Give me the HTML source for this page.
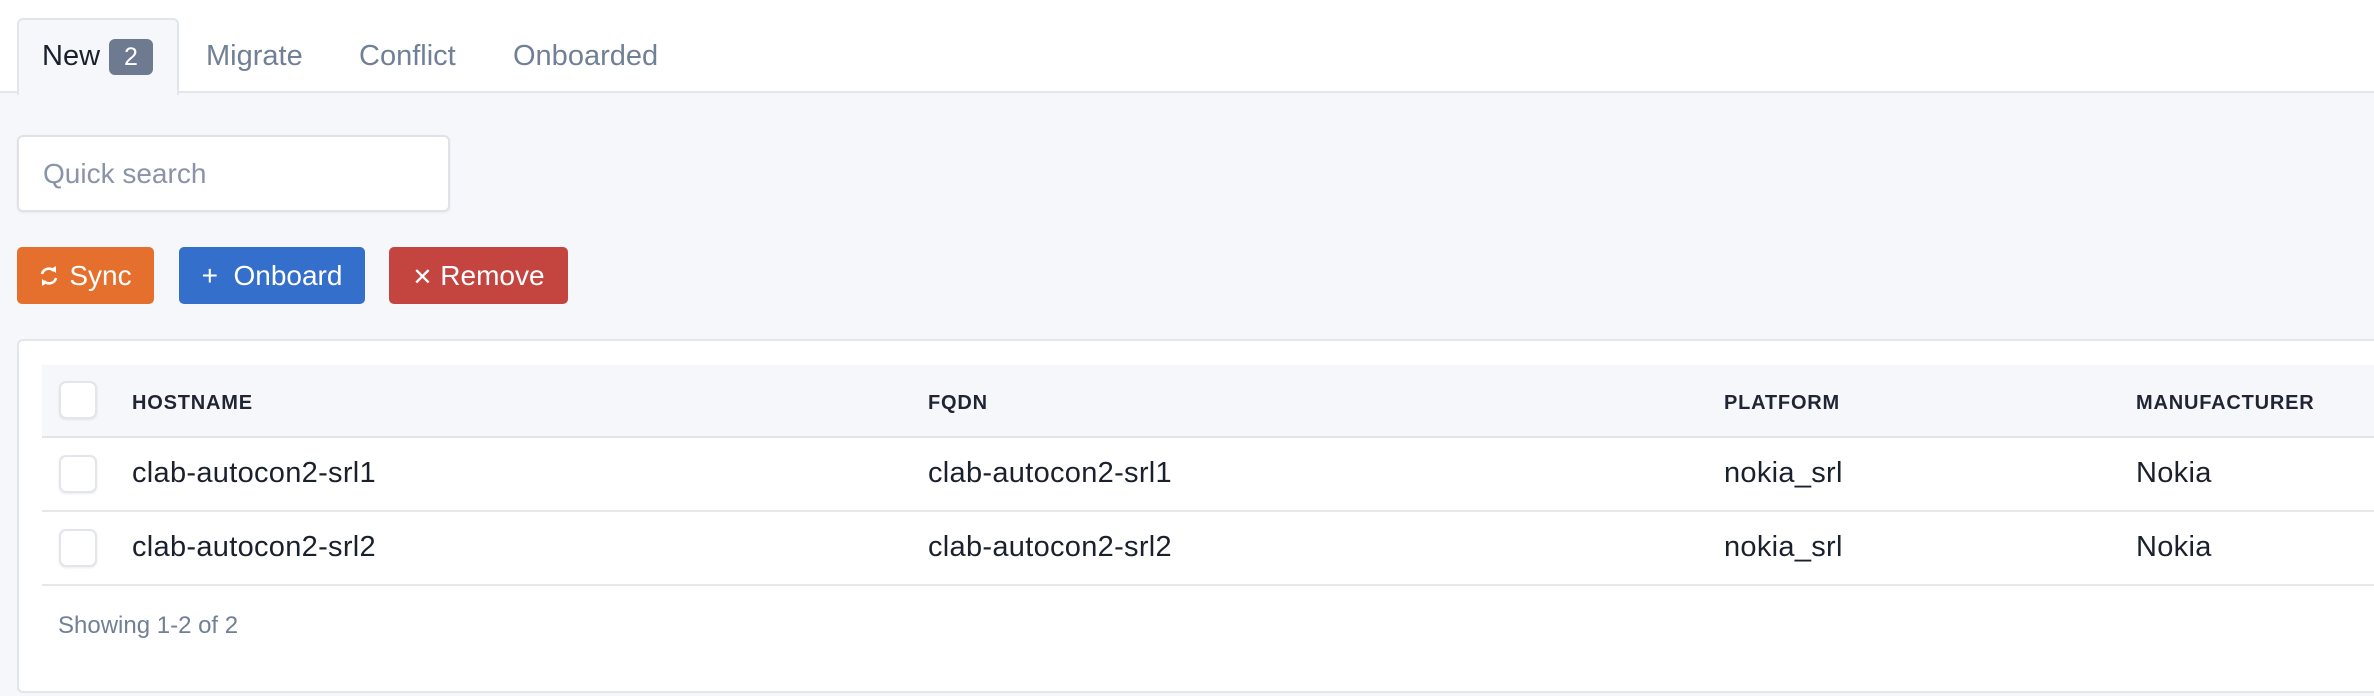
<!DOCTYPE html>
<html><head><meta charset="utf-8"><style>
*{box-sizing:border-box;margin:0;padding:0}
body{width:2374px;height:696px;overflow:hidden;background:#f6f7fa;font-family:"Liberation Sans",sans-serif;position:relative;color:#1a202c}
.top{position:absolute;left:0;top:0;width:2374px;height:93px;background:#fff;border-bottom:2px solid #e2e5ea}
.tab{position:absolute;font-size:29px;color:#718096;line-height:1;white-space:nowrap}
.active{position:absolute;left:17px;top:18px;width:162px;height:77px;background:#f6f7fa;border:2px solid #e2e5ea;border-bottom:none;border-radius:6px 6px 0 0}
.badge{position:absolute;left:109px;top:39px;width:44px;height:36px;background:#6e7a8f;border-radius:6px;color:#fff;font-size:25px;text-align:center;line-height:36px}
.search{position:absolute;left:17px;top:135px;width:433px;height:77px;background:#fff;border:2px solid #dfe2e8;border-radius:6px;box-shadow:0 1px 2px rgba(0,0,0,.06);font-size:28px;color:#8a94a8;padding-left:24px;line-height:73px}
.btn{position:absolute;top:247px;height:57px;border-radius:5px;color:#fff;font-size:28px;line-height:57px;white-space:nowrap;text-align:center}
.card{position:absolute;left:17px;top:339px;width:2400px;height:354px;background:#fff;border:2px solid #e2e5ea;border-radius:6px}
.hdr{position:absolute;left:42px;top:365px;width:2332px;height:73px;background:#f6f7fa;border-bottom:2px solid #e2e5ea}
.line{position:absolute;left:42px;width:2332px;height:2px;background:#e5e7eb}
.cb{position:absolute;left:59px;width:38px;height:38px;background:#fff;border:2px solid #e2e5ea;border-radius:7px;box-shadow:0 1px 2px rgba(0,0,0,.08)}
.h{position:absolute;font-size:20px;font-weight:bold;letter-spacing:.8px;color:#1f2633;top:392px}
.c{position:absolute;font-size:29px;letter-spacing:.3px;color:#1a202c;white-space:nowrap}
</style></head><body>
<div class="top"></div>
<div class="active"></div>
<div class="tab" style="left:42px;top:42px;color:#1a202c">New</div>
<div class="badge">2</div>
<div class="tab" style="left:206px;top:42px">Migrate</div>
<div class="tab" style="left:359px;top:42px">Conflict</div>
<div class="tab" style="left:513px;top:42px">Onboarded</div>
<div class="search">Quick search</div>
<div class="btn" style="left:17px;width:137px;background:#e56f2d"><svg width="20" height="26" viewBox="0 0 20 26" style="vertical-align:-4px;margin-right:10px"><path d="M15 8A7 7 0 0 0 3 11M5 18A7 7 0 0 0 17 15" stroke="#fff" stroke-width="2.6" fill="none"/><path d="M12 6l5-3v7z M8 20l-5 3v-7z" fill="#fff"/></svg>Sync</div>
<div class="btn" style="left:179px;width:186px;background:#346fcc">+&nbsp; Onboard</div>
<div class="btn" style="left:389px;width:179px;background:#c44540"><span style="font-size:24px">✕</span> Remove</div>
<div class="card"></div>
<div class="hdr"></div>
<div class="cb" style="top:381px"></div>
<div class="h" style="left:132px">HOSTNAME</div>
<div class="h" style="left:928px">FQDN</div>
<div class="h" style="left:1724px">PLATFORM</div>
<div class="h" style="left:2136px">MANUFACTURER</div>
<div class="cb" style="top:455px"></div>
<div class="c" style="left:132px;top:457px">clab-autocon2-srl1</div>
<div class="c" style="left:928px;top:457px">clab-autocon2-srl1</div>
<div class="c" style="left:1724px;top:457px">nokia_srl</div>
<div class="c" style="left:2136px;top:457px">Nokia</div>
<div class="line" style="top:510px"></div>
<div class="cb" style="top:529px"></div>
<div class="c" style="left:132px;top:531px">clab-autocon2-srl2</div>
<div class="c" style="left:928px;top:531px">clab-autocon2-srl2</div>
<div class="c" style="left:1724px;top:531px">nokia_srl</div>
<div class="c" style="left:2136px;top:531px">Nokia</div>
<div class="line" style="top:584px"></div>
<div class="c" style="left:58px;top:612px;font-size:24px;letter-spacing:0;color:#718096">Showing 1-2 of 2</div>
</body></html>
